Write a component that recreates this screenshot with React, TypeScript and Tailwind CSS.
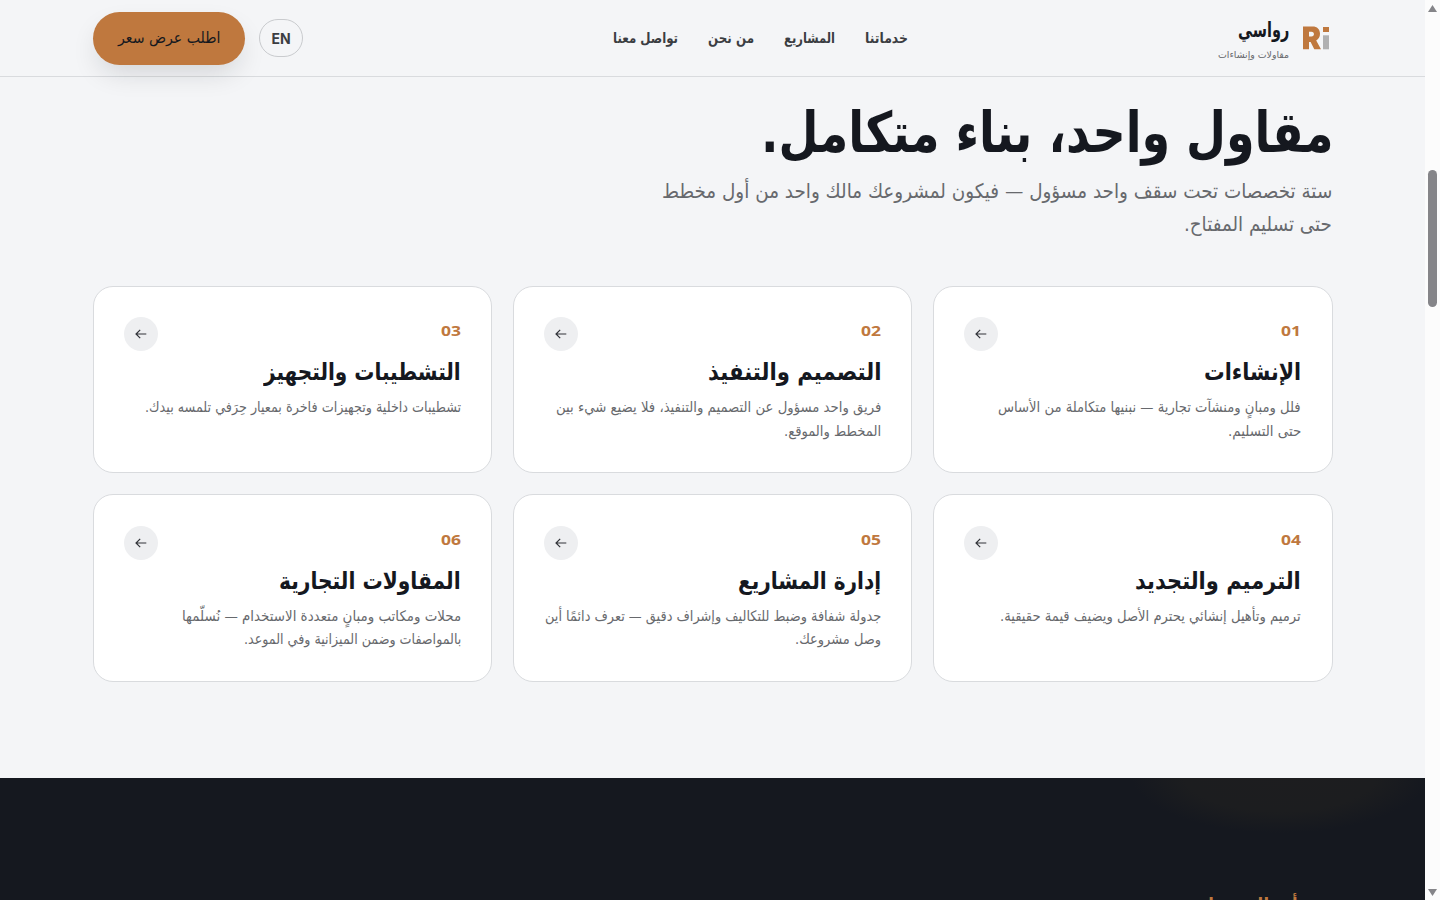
import { useLayoutEffect, useRef } from "react";
import type { ReactNode } from "react";

// Keeps a single line of text at a fixed measure, anchored to its right edge.
function Line({ w, children, className = "" }: { w: number; children: ReactNode; className?: string }) {
  const ref = useRef<HTMLSpanElement>(null);
  useLayoutEffect(() => {
    const fit = () => {
      const el = ref.current;
      if (el && el.offsetWidth) el.style.transform = `scaleX(${w / el.offsetWidth})`;
    };
    fit();
    document.fonts.ready.then(fit);
  }, [w]);
  return (
    <span className={`flex justify-start whitespace-nowrap ${className}`} style={{ width: w }}>
      <span ref={ref} className="block shrink-0 origin-right">{children}</span>
    </span>
  );
}

type Service = { n: string; title: string; tw: number; lines: [string, number][] };

const services: Service[] = [
  { n: "01", title: "الإنشاءات", tw: 97, lines: [["فلل ومبانٍ ومنشآت تجارية — نبنيها متكاملة من الأساس", 303], ["حتى التسليم.", 73]] },
  { n: "02", title: "التصميم والتنفيذ", tw: 173, lines: [["فريق واحد مسؤول عن التصميم والتنفيذ، فلا يضيع شيء بين", 325], ["المخطط والموقع.", 97]] },
  { n: "03", title: "التشطيبات والتجهيز", tw: 197, lines: [["تشطيبات داخلية وتجهيزات فاخرة بمعيار حِرَفي تلمسه بيدك.", 316]] },
  { n: "04", title: "الترميم والتجديد", tw: 166, lines: [["ترميم وتأهيل إنشائي يحترم الأصل ويضيف قيمة حقيقية.", 301]] },
  { n: "05", title: "إدارة المشاريع", tw: 143, lines: [["جدولة شفافة وضبط للتكاليف وإشراف دقيق — تعرف دائمًا أين", 336], ["وصل مشروعك.", 86]] },
  { n: "06", title: "المقاولات التجارية", tw: 182, lines: [["محلات ومكاتب ومبانٍ متعددة الاستخدام — نُسلّمها", 279], ["بالمواصفات وضمن الميزانية وفي الموعد.", 217]] },
];

function Logo() {
  return (
    <svg width="28" height="24" viewBox="0 0 28 24">
      <path fill="#bf783e" fillRule="evenodd" d="M1 0.5H10.5C15.2 0.5 18 3.2 18 7.8C18 11 16.6 13.3 14.2 14.5L19 23.3H12.3L8.6 16H7V23.3H1ZM7 5.8V10.6H9.5C12.8 10.6 12.8 5.8 9.5 5.8Z" />
      <path fill="#bf783e" d="M21 1h6v5h-6z" />
      <path fill="#b0b0b1" d="M21 9.3h6v14h-6z" />
    </svg>
  );
}

function Card({ s, second, first }: { s: Service; second: boolean; first: boolean }) {
  return (
    <article className={`flex justify-between rounded-[20px] border border-[#d9dbde] bg-white pl-[30px] ${first ? "pr-[31px]" : "pr-[30px]"} ${second ? "h-[188px] pt-[31px]" : "h-[187px] pt-[30px]"}`}>
      <div className="w-0">
        <div className="h-[34px] pt-[4px] font-['Noto_Sans','Liberation_Sans',sans-serif] text-[14px] leading-5 font-bold text-[#bf783e]"><Line w={20}>{s.n}</Line></div>
        <h3 className="mt-[4px] h-[35px] text-[24px] leading-[35px] font-bold text-[#15181f]"><Line w={s.tw}>{s.title}</Line></h3>
        <div className={`text-[14.5px] text-[#67696d] ${second ? "mt-[6px] leading-[23px]" : "mt-[5px] leading-6"}`}>
          {s.lines.map(([t, w]) => <Line key={t} w={w}>{t}</Line>)}
        </div>
      </div>
      <span className="flex size-[34px] shrink-0 items-center justify-center rounded-full bg-[#eeeff1]">
        <svg width="12" height="12" viewBox="0 0 12 12" fill="none" stroke="#303238" strokeWidth="1.2"><path d="M11.3 6H1.2M5.2 1.8L1 6l4.2 4.2" /></svg>
      </span>
    </article>
  );
}

export default function App() {
  return (
    <div dir="ltr" className="flex h-[900px] w-[1440px] overflow-hidden bg-[#f4f5f7] font-['DejaVu_Sans',sans-serif]">
      <div dir="rtl" className="flex w-[1425px] shrink-0 flex-col">
        <header className="flex h-[77px] shrink-0 items-center justify-between border-b border-[#d9dbde] px-[93px]">
          <div className="flex w-[200px] items-center gap-[13px] pr-[2px]">
            <Logo />
            <div>
              <div className="h-[27px] pt-[2px] text-[21px] leading-[27px] font-bold text-[#15181f]"><Line w={51}>رواسي</Line></div>
              <div className="mt-[6px] h-[13px] text-[9.5px] leading-[14px] text-[#67696d]"><Line w={71}>مقاولات وإنشاءات</Line></div>
            </div>
          </div>
          <nav className="mr-[224px] flex gap-[30px] text-[14.5px] leading-6 font-bold text-[#3b3d42]">
            <Line w={43}>خدماتنا</Line>
            <Line w={51}>المشاريع</Line>
            <Line w={46}>من نحن</Line>
            <Line w={65}>تواصل معنا</Line>
          </nav>
          <div className="mr-auto flex items-center gap-[14px]">
            <button className="h-[38px] w-[44px] rounded-full border border-[#c9cbce] font-['Inter','Liberation_Sans',sans-serif] text-[14px] font-bold text-[#3b3d42]">EN</button>
            <button className="flex h-[53px] w-[152px] items-center justify-center rounded-full bg-[#bf783e] pt-[2px] text-[15.5px] text-[#15181f] shadow-[0_12px_28px_-6px_rgba(21,24,31,0.16)]"><Line w={102}>اطلب عرض سعر</Line></button>
          </div>
        </header>
        <main className="h-[701px] shrink-0 pr-[92px] pl-[93px]">
          <h1 className="mt-[17px] h-[78px] text-[56px] leading-[78px] font-bold text-[#15181f]"><Line w={572}>مقاول واحد، بناء متكامل.</Line></h1>
          <div className="mt-[3px] pr-px text-[20px] leading-[33px] text-[#67696d]">
            <Line w={670}>ستة تخصصات تحت سقف واحد مسؤول — فيكون لمشروعك مالك واحد من أول مخطط</Line>
            <Line w={148}>حتى تسليم المفتاح.</Line>
          </div>
          <section className="mt-[45px] grid grid-cols-[400px_399px_399px] gap-[21px]">
            {services.map((s, i) => <Card key={s.n} s={s} second={i > 2} first={i % 3 === 0} />)}
          </section>
        </main>
        <section className="h-[122px] shrink-0 overflow-hidden bg-[#15181f] bg-[radial-gradient(ellipse_150px_60px_at_1280px_-5px,#1d1d1f_0%,#1c1d1f_65%,#15181f_100%)] pt-[113px] pr-[127px]">
          <div className="text-[15px] leading-6 font-bold text-[#bf783e]"><Line w={109}>أعمال مختارة</Line></div>
        </section>
      </div>
      <div className="flex w-[15px] flex-col items-center bg-[#fcfcfc]">
        <svg className="mt-[4px]" width="15" height="9" viewBox="0 0 15 9"><path d="M7.5 1L12 8H3Z" fill="#858589" /></svg>
        <div className="mt-[157px] h-[137px] w-[9px] rounded-full bg-[#858589]" />
        <svg className="mt-auto mb-[3px]" width="15" height="9" viewBox="0 0 15 9"><path d="M3 1h9L7.5 8Z" fill="#858589" /></svg>
      </div>
    </div>
  );
}
